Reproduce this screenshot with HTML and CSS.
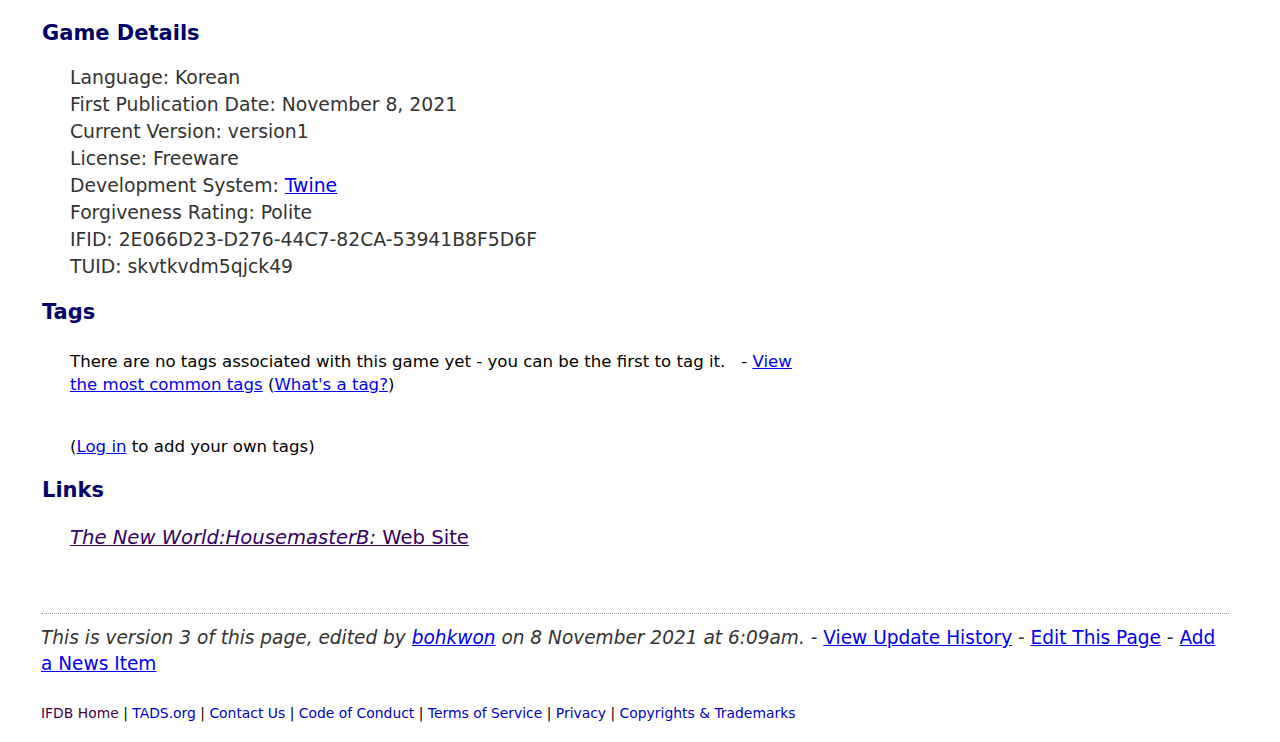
FILE: index.html
```html
<!DOCTYPE html>
<html>
<head>
<meta charset="utf-8">
<link rel="stylesheet" href="styles.css">
</head>
<body>
<div class="page">
  <h2 class="head first">Game Details</h2>
  <div class="details">
    <div>Language: Korean</div>
    <div>First Publication Date: November 8, 2021</div>
    <div>Current Version: version1</div>
    <div>License: Freeware</div>
    <div>Development System: <a href="#" class="lk">Twine</a></div>
    <div>Forgiveness Rating: Polite</div>
    <div>IFID: 2E066D23-D276-44C7-82CA-53941B8F5D6F</div>
    <div>TUID: skvtkvdm5qjck49</div>
  </div>

  <h2 class="head">Tags</h2>
  <div class="tags">
    <p class="tagline">There are no tags associated with this game yet - you can be the first to tag it. &nbsp; - <a href="#" class="lk">View the most common tags</a> (<a href="#" class="lk">What's a tag?</a>)</p>
    <p class="login">(<a href="#" class="lk">Log in</a> to add your own tags)</p>
  </div>

  <h2 class="head">Links</h2>
  <div class="links">
    <a href="#" class="visited"><i>The New World:HousemasterB:</i> Web Site</a>
  </div>

  <div class="version">
    <i>This is version 3 of this page, edited by <a href="#" class="lk">bohkwon</a> on 8 November 2021 at 6:09am.</i> - <a href="#" class="lk">View Update History</a> - <a href="#" class="lk">Edit This Page</a> - <a href="#" class="lk">Add a News Item</a>
  </div>

  <div class="footer">
    <a href="#" class="home">IFDB Home</a> | <a href="#">TADS.org</a> | <a href="#">Contact Us</a> | <a href="#">Code of Conduct</a> | <a href="#">Terms of Service</a> | <a href="#">Privacy</a> | <a href="#">Copyrights &amp; Trademarks</a>
  </div>
</div>
</body>
</html>
```
FILE: styles.css
```css
html, body {
  margin: 0;
  padding: 0;
  background: #ffffff;
}
body {
  font-family: "DejaVu Sans", Verdana, sans-serif;
  color: #333333;
}
.page {
  padding: 19px 51px 0 41px;
}
.head {
  font-size: 21px;
  font-weight: bold;
  color: #000066;
  margin: 0 0 0 1px;
  line-height: 28px;
}
.details {
  padding: 17px 0 0 29px;
  font-size: 18.8px;
  line-height: 27px;
  color: #333333;
  margin-bottom: 18px;
}
.lk {
  color: #0000ee;
  text-decoration: underline;
}
.tags {
  padding-left: 29px;
  font-size: 16.6px;
  line-height: 23px;
  color: #000000;
  width: 728px;
  margin-top: 24px;
}
.tagline {
  margin: 0;
}
.login {
  margin: 39px 0 0 0;
}
.tags + .head {
  margin-top: 18px;
}
.links {
  padding: 22px 0 0 29px;
  font-size: 19.6px;
  line-height: 24px;
}
.visited {
  color: #330066;
  text-decoration: underline;
}
.version {
  margin-top: 63px;
  border-top: 1px dotted #999999;
  padding-top: 11px;
  font-size: 18.55px;
  line-height: 26px;
  color: #333333;
}
.footer {
  margin-top: 26px;
  font-size: 13.9px;
  line-height: 20px;
  color: #000000;
}
.footer a {
  color: #0000cc;
  text-decoration: none;
}
.footer a.home {
  color: #440044;
}
```
